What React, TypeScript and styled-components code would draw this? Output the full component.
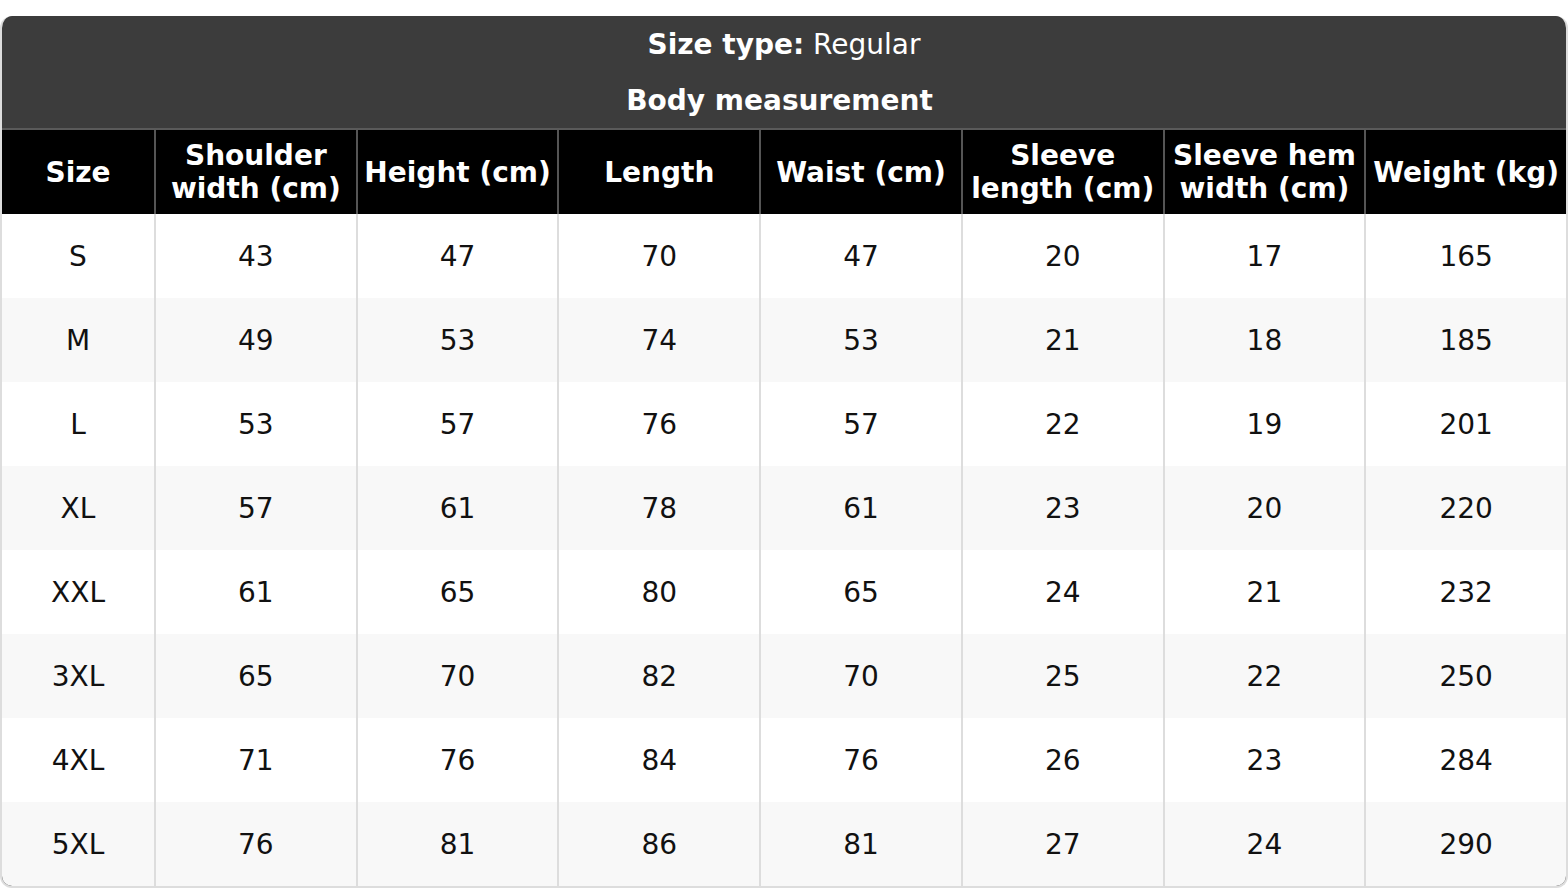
import React from "react";
import styled, { createGlobalStyle } from "styled-components";

const GlobalStyle = createGlobalStyle`
  html, body {
    margin: 0;
    padding: 0;
    background: #ffffff;
  }
  body {
    font-family: "DejaVu Sans", Verdana, sans-serif;
  }
`;

const columns = [
  "Size",
  "Shoulder width (cm)",
  "Height (cm)",
  "Length",
  "Waist (cm)",
  "Sleeve length (cm)",
  "Sleeve hem width (cm)",
  "Weight (kg)",
];

const rows: (string | number)[][] = [
  ["S", 43, 47, 70, 47, 20, 17, 165],
  ["M", 49, 53, 74, 53, 21, 18, 185],
  ["L", 53, 57, 76, 57, 22, 19, 201],
  ["XL", 57, 61, 78, 61, 23, 20, 220],
  ["XXL", 61, 65, 80, 65, 24, 21, 232],
  ["3XL", 65, 70, 82, 70, 25, 22, 250],
  ["4XL", 71, 76, 84, 76, 26, 23, 284],
  ["5XL", 76, 81, 86, 81, 27, 24, 290],
];

const App: React.FC = () => {
  return (
    <Page>
      <GlobalStyle />
      <Chart>
        <Caption>
          <CaptionLine>
            <strong>Size type:</strong> Regular
          </CaptionLine>
          <CaptionLine $shift={9}>
            <strong>Body measurement</strong>
          </CaptionLine>
        </Caption>
        <Grid>
          {columns.map((c, i) => (
            <HeadCell key={c} $first={i === 0}>
              {c}
            </HeadCell>
          ))}
          {rows.map((r, ri) =>
            r.map((v, ci) => (
              <Cell key={`${ri}-${ci}`} $first={ci === 0} $alt={ri % 2 === 1}>
                {v}
              </Cell>
            ))
          )}
        </Grid>
      </Chart>
    </Page>
  );
};

export default App;

const Page = styled.div`
  padding-top: 16px;
  width: 1568px;
`;

const Chart = styled.div`
  border: 2px solid #dddddd;
  border-top: none;
  border-radius: 12px;
  overflow: hidden;
  background: #ffffff;
`;

const Caption = styled.div`
  background: #3c3c3c;
  color: #ffffff;
  display: flex;
  flex-direction: column;
  margin: 0 -2px;
`;

const CaptionLine = styled.div<{ $shift?: number }>`
  height: 56px;
  display: flex;
  align-items: center;
  justify-content: center;
  font-size: 28px;
  white-space: pre;
  padding-right: ${(p) => p.$shift ?? 0}px;

  strong {
    font-weight: 700;
  }
`;

const Grid = styled.div`
  display: grid;
  grid-template-columns: 152px repeat(7, 1fr);
  border-top: 2px solid #5a5a5a;
  margin: 0 -2px 0 -2px;
  padding: 0 2px;
  background: #000000;
  background-clip: content-box;
`;

const HeadCell = styled.div<{ $first?: boolean }>`
  height: 84px;
  background: #000000;
  color: #ffffff;
  font-size: 28px;
  font-weight: 700;
  display: flex;
  align-items: center;
  justify-content: center;
  text-align: center;
  padding: 0 6px;
  box-sizing: border-box;
  border-left: ${(p) => (p.$first ? "none" : "2px solid #555555")};
`;

const Cell = styled.div<{ $first?: boolean; $alt?: boolean }>`
  height: 84px;
  background: ${(p) => (p.$alt ? "#f8f8f8" : "#ffffff")};
  color: #111111;
  font-size: 28px;
  display: flex;
  align-items: center;
  justify-content: center;
  box-sizing: border-box;
  border-left: ${(p) => (p.$first ? "none" : "2px solid #dddddd")};
`;
